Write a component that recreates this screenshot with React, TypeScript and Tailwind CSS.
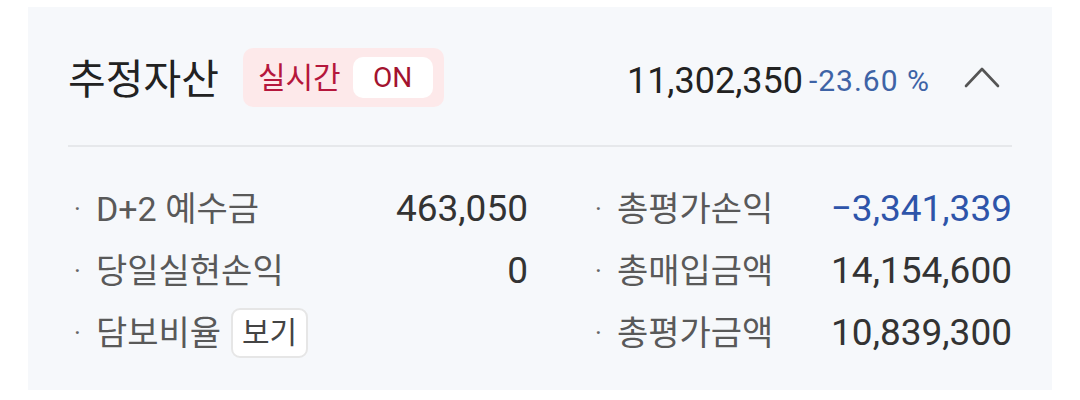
import { ReactNode } from "react";

const Row = ({
	label,
	value,
	valueClass = "text-[#333333]",
	extra,
}: {
	label: string;
	value?: string;
	valueClass?: string;
	extra?: ReactNode;
}) => (
	<div className="flex flex-row items-center justify-between h-[62px]">
		<div className="flex flex-row items-center">
			<span className="w-[28px] pl-[6px] text-[26px] text-[#666666]">·</span>
			<span className="text-[34px] text-[#595959]">{label}</span>
			{extra}
		</div>
		{value !== undefined && (
			<span className={`text-[37px] ${valueClass}`}>{value}</span>
		)}
	</div>
);

export default function App() {
	return (
		<div className="w-[1080px] h-[400px] bg-white pt-[7px] pl-[28px] font-['Roboto','Noto_Sans_CJK_KR',sans-serif]">
			<div className="w-[1024px] h-[383px] bg-[#f6f8fb] px-[40px] pt-[41px]">
				{/* header */}
				<div className="flex flex-row items-center justify-between h-[59px]">
					<div className="flex flex-row items-center">
						<span className="mt-[6px] text-[41px] text-[#222222] leading-none">
							추정자산
						</span>
						<div className="ml-[24px] flex flex-row items-center h-[59px] rounded-[10px] bg-[#fde9ea] pl-[15px] pr-[11px]">
							<span className="text-[30px] text-[#b5173c] leading-none">
								실시간
							</span>
							<span className="ml-[12px] flex items-center justify-center w-[80px] h-[41px] rounded-[10px] bg-white text-[28px] text-[#a3132f] leading-none">
								ON
							</span>
						</div>
					</div>
					<div className="mt-[6px] flex flex-row items-center">
						<span className="text-[36px] text-[#222222] leading-none">11,302,350</span>
						<span className="ml-[6px] text-[30px] tracking-[1px] text-[#3e63a6] leading-none">
							-23.60 %
						</span>
						<svg
							width="36"
							height="24"
							viewBox="0 0 36 24"
							className="ml-[34px] mr-[12px] -mt-[6px]"
						>
							<polyline
								points="2,20 18,3 34,20"
								fill="none"
								stroke="#555555"
								strokeWidth="2.6"
								strokeLinecap="round"
								strokeLinejoin="round"
							/>
						</svg>
					</div>
				</div>

				<div className="mt-[38px] h-[2px] bg-[#e6e8eb]" />

				{/* details */}
				<div className="mt-[31px] flex flex-row">
					<div className="w-[460px] flex flex-col">
						<Row label="D+2 예수금" value="463,050" />
						<Row label="당일실현손익" value="0" />
						<Row
							label="담보비율"
							extra={
								<span className="ml-[10px] flex items-center justify-center w-[77px] h-[50px] rounded-[9px] border-2 border-[#e6e6e6] bg-white text-[30px] text-[#444444] leading-none">
									보기
								</span>
							}
						/>
					</div>
					<div className="ml-[61px] flex-1 flex flex-col">
						<Row label="총평가손익" value="−3,341,339" valueClass="text-[#2e54a9]" />
						<Row label="총매입금액" value="14,154,600" />
						<Row label="총평가금액" value="10,839,300" />
					</div>
				</div>
			</div>
		</div>
	);
}
